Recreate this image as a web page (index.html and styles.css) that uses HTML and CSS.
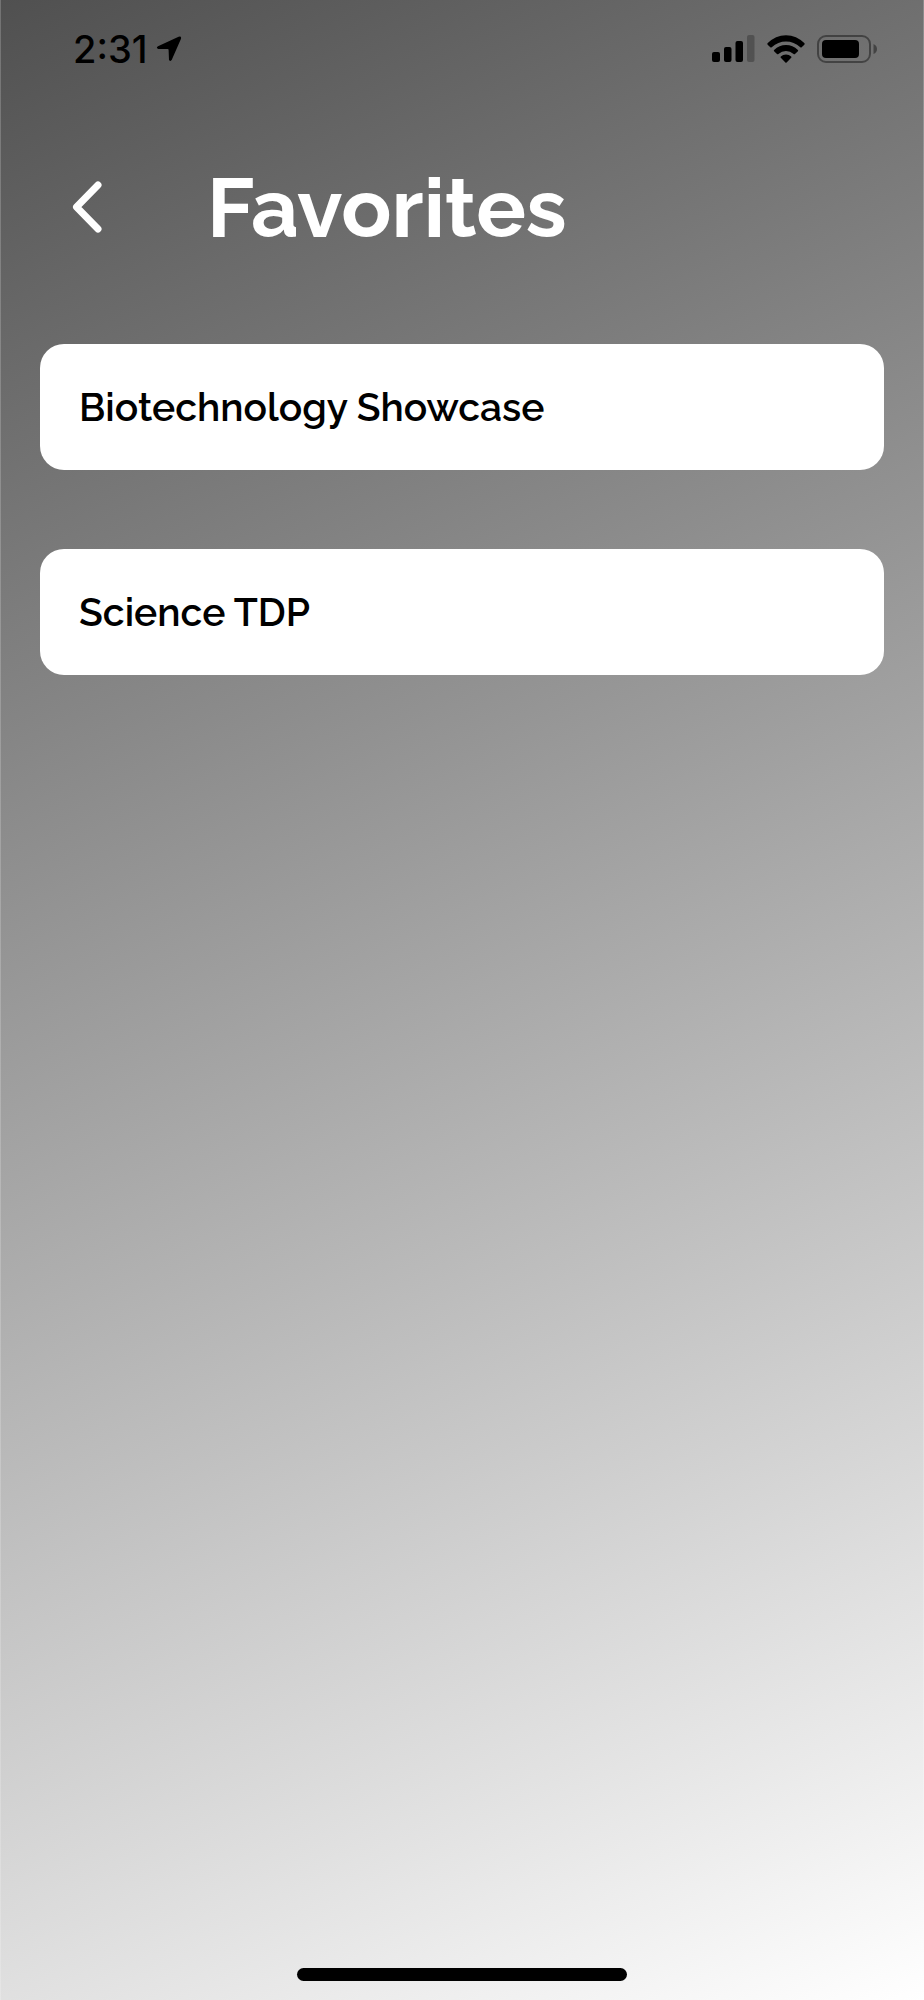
FILE: index.html
```
<!DOCTYPE html>
<html lang="en">
    <head>
        <meta charset="UTF-8">
        <meta name="viewport" content="width=device-width, initial-scale=1.0">
        <title>Favorites</title>
        <link rel="stylesheet" href="styles.css">
    </head>
    <body>

    <div class="status-bar">
        <div class="status-left">
            <span class="time">2:31</span>
            <svg class="location" width="26" height="26" viewBox="0 0 26 26">
                <path d="M2 10.2 L22.6 .7 Q25.8 -.2 24.9 3 L15.8 23.8 Q14.6 26 13 24 L12.6 13.8 Q12.5 13 11.8 13 L2.2 12.9 Q-.4 11.6 2 10.2 Z"/>
            </svg>
        </div>
        <div class="status-right">
            <svg width="43" height="28" viewBox="0 0 43 28">
                <rect x="0" y="17" width="8" height="10" rx="2"/>
                <rect x="12" y="12" width="7.5" height="15" rx="2"/>
                <rect x="23.5" y="6" width="7.5" height="21" rx="2"/>
                <rect class="faded" x="35" y="0" width="7.5" height="27" rx="2"/>
            </svg>
            <svg width="38" height="28" viewBox="0 0 38 28">
                <path d="M.5 8.3 Q8.5 .2 19 .2 T37.5 8.3 Q38 9 37.3 9.7 L34.7 12.3 Q34 12.8 33.3 12.2 Q27 6.4 19 6.4 T4.7 12.2 Q4 12.8 3.3 12.3 L.7 9.7 Q0 9 .5 8.3 Z"/>
                <path d="M7.1 14.9 Q12.2 9.9 19 9.9 T30.9 14.9 Q31.5 15.6 30.9 16.2 L28 18.9 Q27.3 19.5 26.6 18.9 Q23.2 16 19 16 T11.4 18.9 Q10.7 19.5 10 18.9 L7.1 16.2 Q6.5 15.6 7.1 14.9 Z"/>
                <path d="M13.8 21.5 Q16 19.6 19 19.6 T24.2 21.5 Q24.8 22.2 24.2 22.8 L19.6 27.4 Q19 28 18.4 27.4 L13.8 22.8 Q13.2 22.2 13.8 21.5 Z"/>
            </svg>
            <svg width="61" height="28" viewBox="0 0 61 28">
                <rect class="outline" x="1" y="1" width="52" height="26" rx="8"/>
                <rect x="5" y="5" width="37" height="18" rx="4"/>
                <path class="nub" d="M56.5 9 Q60 10.5 60 14 T56.5 19 Z"/>
            </svg>
        </div>
    </div>

    <header class="header">
        <button class="back" aria-label="Back">
            <svg width="30" height="52" viewBox="0 0 30 52">
                <path d="M26 4 L4.5 26 L26 48"/>
            </svg>
        </button>
        <h1>Favorites</h1>
    </header>

    <main class="favorites">
        <button class="card">Biotechnology Showcase</button>
        <button class="card">Science TDP</button>
    </main>

    <div class="home-indicator"></div>

    </body>
</html>
```

FILE: styles.css
```
* {
    box-sizing: border-box;
    margin: 0;
    padding: 0;
}
body {
    display: flex;
    flex-direction: column;
    min-height: 100vh;
    background: linear-gradient(155deg, #505050, #fff);
    border-left: 1px solid rgba(255, 255, 255, 0.2);
    border-right: 1px solid rgba(255, 255, 255, 0.2);
    font-family: Raleway, Lato, sans-serif;
}
.status-bar {
    display: flex;
    justify-content: space-between;
    align-items: center;
    height: 98px;
    padding: 0 45px 0 72px;
}
.status-left {
    display: flex;
    align-items: center;
    gap: 8px;
}
.time {
    font-family: Inter, sans-serif;
    font-size: 38px;
    font-weight: 500;
}
.status-right {
    display: flex;
    align-items: center;
    gap: 12px;
}
.faded {
    opacity: 0.25;
}
.outline {
    fill: none;
    stroke: #000;
    stroke-width: 2;
    opacity: 0.4;
}
.nub {
    opacity: 0.4;
}
.header {
    display: flex;
    align-items: center;
    gap: 105px;
    height: 218px;
    padding: 0 71px;
}
.back {
    display: flex;
    background: none;
    border: 0;
    cursor: pointer;
}
.back path {
    fill: none;
    stroke: #fff;
    stroke-width: 7;
    stroke-linecap: round;
    stroke-linejoin: round;
}
h1 {
    color: #fff;
    font-size: 83px;
    font-weight: 700;
}
.favorites {
    display: flex;
    flex-direction: column;
    gap: 79px;
    padding: 28px 39px;
}
.card {
    min-height: 126px;
    padding: 0 39px;
    background: #fff;
    border: 0;
    border-radius: 24px;
    color: #000;
    font-family: inherit;
    font-size: 39px;
    font-weight: 600;
    text-align: left;
    cursor: pointer;
}
.home-indicator {
    width: 330px;
    height: 13px;
    margin: auto auto 19px;
    background: #000;
    border-radius: 7px;
}
```
